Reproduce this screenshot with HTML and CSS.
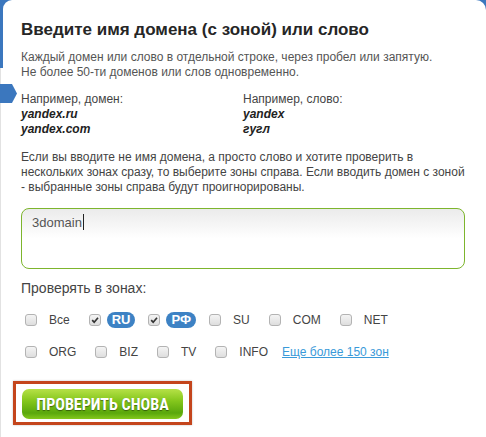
FILE: index.html
```html
<!DOCTYPE html>
<html lang="ru">
<head>
<meta charset="utf-8">
<title>Проверка домена</title>
<link rel="stylesheet" href="styles.css">
</head>
<body>
<div class="stage">
  <span class="edge"></span>
  <span class="marker"></span>
  <div class="panel">
    <h1 class="title">Введите имя домена (с зоной) или слово</h1>
    <p class="hint">Каждый домен или слово в отдельной строке, через пробел или запятую.<br>Не более 50-ти доменов или слов одновременно.</p>
    <div class="examples">
      <div class="example">
        <span>Например, домен:</span>
        <b>yandex.ru</b>
        <b>yandex.com</b>
      </div>
      <div class="example">
        <span>Например, слово:</span>
        <b>yandex</b>
        <b>гугл</b>
      </div>
    </div>
    <p class="note">Если вы вводите не имя домена, а просто слово и хотите проверить в<br>нескольких зонах сразу, то выберите зоны справа. Если вводить домен с зоной<br>- выбранные зоны справа будут проигнорированы.</p>
    <div class="field"><span>3domain</span><span class="caret"></span></div>
    <div class="zones-title">Проверять в зонах:</div>
    <div class="zones">
      <div class="zone"><span class="cb"></span><span class="lbl">Все</span></div>
      <div class="zone"><span class="cb checked"><svg viewBox="0 0 12 12"><path d="M2.6 6.2 L5 8.6 L9.6 3.2"/></svg></span><span class="lbl pill">RU</span></div>
      <div class="zone"><span class="cb checked"><svg viewBox="0 0 12 12"><path d="M2.6 6.2 L5 8.6 L9.6 3.2"/></svg></span><span class="lbl pill">РФ</span></div>
      <div class="zone"><span class="cb"></span><span class="lbl">SU</span></div>
      <div class="zone"><span class="cb"></span><span class="lbl">COM</span></div>
      <div class="zone"><span class="cb"></span><span class="lbl">NET</span></div>
    </div>
    <div class="zones second">
      <div class="zone"><span class="cb"></span><span class="lbl">ORG</span></div>
      <div class="zone"><span class="cb"></span><span class="lbl">BIZ</span></div>
      <div class="zone"><span class="cb"></span><span class="lbl">TV</span></div>
      <div class="zone"><span class="cb"></span><span class="lbl">INFO</span></div>
      <a class="more" href="#">Еще более 150 зон</a>
    </div>
    <div class="frame"><button class="submit" type="button">ПРОВЕРИТЬ СНОВА</button></div>
  </div>
</div>
</body>
</html>
```
FILE: styles.css
```css
html, body {
  margin: 0;
  padding: 0;
  background: #fff;
}

body {
  font-family: "Liberation Sans", Arial, sans-serif;
  color: #444;
}

.stage {
  position: relative;
  height: 437px;
  overflow: hidden;
  background:
    linear-gradient(to right, #e2e2e2 0 1px, transparent 1px),
    linear-gradient(#3b77be 0 12px, #fff 12px);
}

.edge {
  position: absolute;
  left: 0;
  top: 0;
  width: 3px;
  height: 68px;
  background: #3b77be;
}

.marker {
  position: absolute;
  left: 0;
  top: 84px;
  width: 17px;
  height: 19px;
  background: #3b77be;
  clip-path: polygon(0 0, 12px 0, 17px 50%, 12px 100%, 0 100%);
  z-index: 2;
}

.panel {
  position: relative;
  margin-left: 3px;
  height: 100%;
  box-sizing: border-box;
  padding: 20px 21px 0 18px;
  background: #fff;
  border-radius: 9px 10px 0 0;
}

.title {
  margin: 0;
  font-size: 17px;
  line-height: 20px;
  font-weight: bold;
  color: #262626;
}

.hint {
  margin: 10px 0 0;
  font-size: 12px;
  line-height: 15px;
  color: #555;
}

.examples {
  display: grid;
  grid-template-columns: 222px 222px;
  margin-top: 12px;
  font-size: 12px;
  line-height: 15px;
  color: #444;
}

.example {
  display: flex;
  flex-direction: column;
}

.example b {
  font-style: italic;
  font-weight: bold;
  color: #222;
}

.note {
  margin: 13px 0 0;
  font-size: 12px;
  line-height: 15px;
  color: #444;
  white-space: nowrap;
}

.field {
  margin-top: 13px;
  height: 61px;
  box-sizing: border-box;
  border: 1px solid #7db52d;
  border-radius: 8px;
  padding: 5px 10px;
  font-size: 13px;
  line-height: 17px;
  color: #555;
  background: linear-gradient(#ebebeb, #fff 50%);
  display: flex;
  align-items: flex-start;
}

.caret {
  display: inline-block;
  width: 1px;
  height: 16px;
  margin-left: 1px;
  background: #222;
}

.zones-title {
  margin-top: 11px;
  font-size: 14px;
  line-height: 17px;
  color: #444;
}

.zones {
  display: flex;
  align-items: center;
  height: 20px;
  margin-top: 13px;
  padding-left: 4px;
  font-size: 12px;
  color: #444;
}

.zones.second {
  margin-top: 12px;
}

.zone {
  display: flex;
  align-items: center;
  gap: 6px;
  margin-right: 13px;
}

.cb {
  width: 12px;
  height: 12px;
  box-sizing: border-box;
  border: 1px solid #b3b3b3;
  border-radius: 3px;
  background: linear-gradient(#f4f4f4, #dedede);
  display: flex;
}

.cb svg {
  width: 10px;
  height: 10px;
}

.cb path {
  fill: none;
  stroke: #333;
  stroke-width: 2;
}

.lbl {
  padding: 0 6px;
  line-height: 15px;
}

.pill {
  padding: 0 5px;
  font-size: 13px;
  line-height: 16px;
  background: #3d82c4;
  color: #fff;
  font-weight: bold;
  border-radius: 8px;
}

.more {
  margin-left: -5px;
  color: #3a9ad9;
  text-decoration: underline;
}

.frame {
  display: inline-block;
  margin-top: 19px;
  margin-left: -8px;
  padding: 5px 6px 3px;
  border: 3px solid #c4451c;
  box-shadow: 0 0 2px rgba(0, 0, 0, 0.25);
}

.submit {
  display: block;
  width: 161px;
  height: 30px;
  padding: 0;
  border: 0;
  border-radius: 7px;
  background: linear-gradient(#b6e147 0%, #84c61c 40%, #5aa70c 80%, #84c81c 100%);
  color: #fff;
  font-family: "Liberation Sans Narrow", "Roboto Condensed", "DejaVu Sans Condensed", "Liberation Sans", sans-serif;
  font-stretch: condensed;
  font-weight: bold;
  font-size: 16px;
  text-shadow: 0 1px 1px rgba(0, 0, 0, 0.45);
}
```
